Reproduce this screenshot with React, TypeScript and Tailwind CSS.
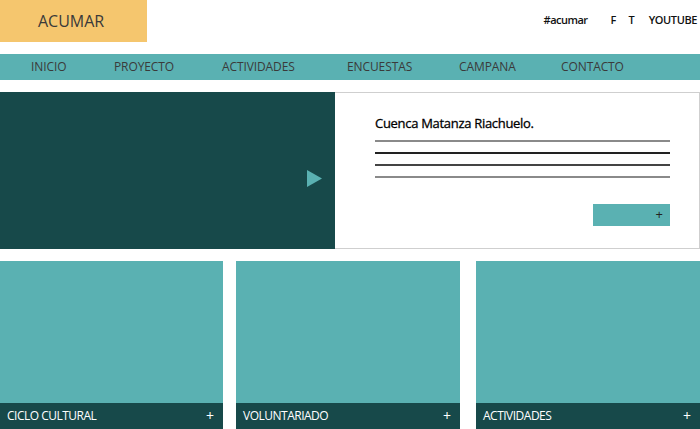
const navItems = [
  { label: "INICIO", w: "w-[83px]" },
  { label: "PROYECTO", w: "w-[108px]" },
  { label: "ACTIVIDADES", w: "w-[125px]" },
  { label: "ENCUESTAS", w: "w-[112px]" },
  { label: "CAMPANA", w: "w-[102px]" },
  { label: "CONTACTO", w: "w-[80px]" },
];

function Card({ label, className }: { label: string; className: string }) {
  return (
    <div className={`flex h-[168px] flex-col justify-end bg-[#5ab1b2] ${className}`}>
      <div className="flex h-[26px] items-center justify-between bg-[#17494a] pl-[7px] pr-[9px] text-[12px] text-white">
        <span className="tracking-[-0.5px]">{label}</span>
        <span className="text-[14px] leading-none">+</span>
      </div>
    </div>
  );
}

export default function App() {
  return (
    <div className="h-[429px] w-[700px] overflow-hidden bg-white font-['Open_Sans',sans-serif] text-[#333]">
      <header className="flex h-[54px] items-start justify-between">
        <div className="flex h-[42px] w-[147px] items-center bg-[#f5c66e] pl-[38px] text-[16px] text-[#3a3a3a]">
          ACUMAR
        </div>
        <div className="mt-[12px] flex items-center pr-[3px] text-[11px] font-semibold text-[#111]">
          <span className="mr-[23px] tracking-[-0.5px]">#acumar</span>
          <span className="mr-[12px]">F</span>
          <span className="mr-[14px]">T</span>
          <span className="tracking-[-0.4px]">YOUTUBE</span>
        </div>
      </header>

      <nav className="flex h-[26px] items-center bg-[#5ab1b2] pl-[31px] text-[12px] text-[#3a3a3a]">
        {navItems.map((item) => (
          <span key={item.label} className={`${item.w} tracking-[-0.1px]`}>
            {item.label}
          </span>
        ))}
      </nav>

      <section className="mt-[12px] flex h-[157px]">
        <div className="flex w-[335px] items-center justify-end bg-[#17494a] pr-[13px]">
          <svg width="15" height="17" viewBox="0 0 15 17" className="mt-[16px]">
            <polygon points="0,0 15,8.5 0,17" fill="#5ab1b2" />
          </svg>
        </div>
        <div className="flex flex-1 flex-col border border-l-0 border-[#cfcfcf] pl-[40px] pr-[29px] pt-[21px]">
          <h2 className="text-[13px] tracking-[-0.3px] text-black [-webkit-text-stroke:0.3px_black]">
            Cuenca Matanza Riachuelo.
          </h2>
          <div className="mt-[6px] flex flex-col gap-[10px]">
            <div className="h-[2px] bg-[#8a8a8a]" />
            <div className="h-[2px] bg-[#222]" />
            <div className="h-[2px] bg-[#444]" />
            <div className="h-[2px] bg-[#8a8a8a]" />
          </div>
          <div className="mt-[26px] flex justify-end">
            <div className="flex h-[22px] w-[77px] items-center justify-end bg-[#5ab1b2] pr-[7px] text-[13px] leading-none text-[#222]">
              +
            </div>
          </div>
        </div>
      </section>

      <section className="mt-[12px] flex">
        <Card label="CICLO CULTURAL" className="w-[223px]" />
        <Card label="VOLUNTARIADO" className="ml-[13px] w-[224px]" />
        <Card label="ACTIVIDADES" className="ml-[16px] flex-1" />
      </section>
    </div>
  );
}
